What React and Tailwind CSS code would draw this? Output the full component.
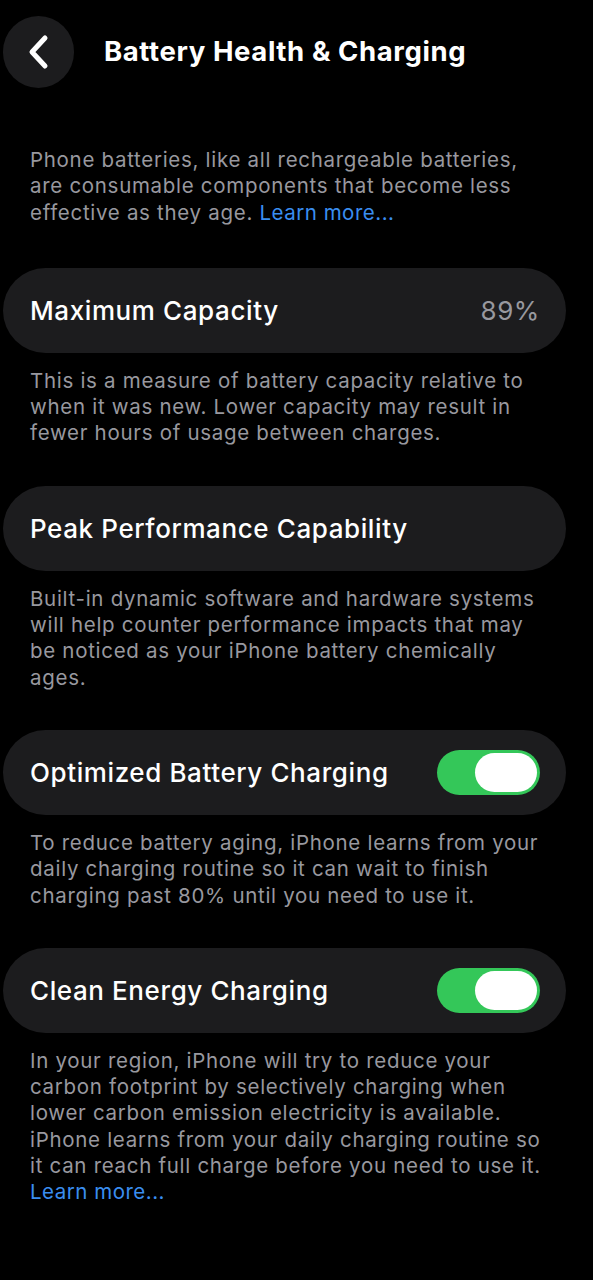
import React, { useState } from 'react';

const Toggle = ({ on, onChange }) => (
  <button
    type="button"
    onClick={() => onChange(!on)}
    className={`flex items-center w-[103px] h-[45px] rounded-full p-[3px] shrink-0 ${
      on ? 'bg-[#34c759] justify-end' : 'bg-[#39393d] justify-start'
    }`}
  >
    <span className="block w-[62px] h-[39px] rounded-full bg-white" />
  </button>
);

const Row = ({ children }) => (
  <div className="ml-[3px] mr-[27px] h-[85px] rounded-full bg-[#1c1c1e] flex items-center justify-between pl-[27px] pr-[26px]">
    {children}
  </div>
);

const Label = ({ children, muted }) => (
  <span className={`text-[26px] tracking-[0.6px] ${muted ? 'text-[#98989f] font-normal' : 'font-medium'}`}>{children}</span>
);

const Note = ({ children }) => (
  <p className="pl-[30px] pr-[48px] pt-[15px] text-[20.5px] leading-[26.3px] text-[#98989f] tracking-[0.7px]">{children}</p>
);

export default function App() {
  const [optimized, setOptimized] = useState(true);
  const [clean, setClean] = useState(true);

  return (
    <div className="min-h-[1280px] bg-black text-white font-['Inter','Liberation_Sans',sans-serif]">
      {/* Header */}
      <div className="flex items-center pt-[16px] pl-[3px]">
        <button className="w-[71px] h-[72px] rounded-full bg-[#1c1c1e] flex items-center justify-center">
          <svg width="24" height="36" viewBox="0 0 24 36" fill="none">
            <path d="M18 4 L5 18 L18 32" stroke="white" strokeWidth="5" strokeLinecap="round" strokeLinejoin="round" />
          </svg>
        </button>
        <h1 className="ml-[30px] text-[27.5px] font-bold tracking-[0.6px]">Battery Health &amp; Charging</h1>
      </div>

      <p className="pl-[30px] pr-[48px] mt-[59px] text-[20.5px] leading-[26.3px] text-[#98989f] tracking-[0.7px]">
        Phone batteries, like all rechargeable batteries, are consumable components that become less effective as they age.{' '}
        <span className="text-[#3a8ef0] tracking-[0.5px]">Learn more...</span>
      </p>

      <div className="mt-[42px]">
        <Row>
          <Label>Maximum Capacity</Label>
          <Label muted>89%</Label>
        </Row>
        <Note>
          This is a measure of battery capacity relative to when it was new. Lower capacity may result in fewer hours of usage between charges.
        </Note>
      </div>

      <div className="mt-[39px]">
        <Row>
          <Label>Peak Performance Capability</Label>
        </Row>
        <Note>
          Built-in dynamic software and hardware systems will help counter performance impacts that may be noticed as your iPhone battery chemically ages.
        </Note>
      </div>

      <div className="mt-[39px]">
        <Row>
          <Label>Optimized Battery Charging</Label>
          <Toggle on={optimized} onChange={setOptimized} />
        </Row>
        <Note>
          To reduce battery aging, iPhone learns from your daily charging routine so it can wait to finish charging past 80% until you need to use it.
        </Note>
      </div>

      <div className="mt-[39px]">
        <Row>
          <Label>Clean Energy Charging</Label>
          <Toggle on={clean} onChange={setClean} />
        </Row>
        <Note>
          In your region, iPhone will try to reduce your carbon footprint by selectively charging when lower carbon emission electricity is available. iPhone learns from your daily charging routine so it can reach full charge before you need to use it.
          <br />
          <span className="text-[#3a8ef0] tracking-[0.5px]">Learn more...</span>
        </Note>
      </div>
    </div>
  );
}
